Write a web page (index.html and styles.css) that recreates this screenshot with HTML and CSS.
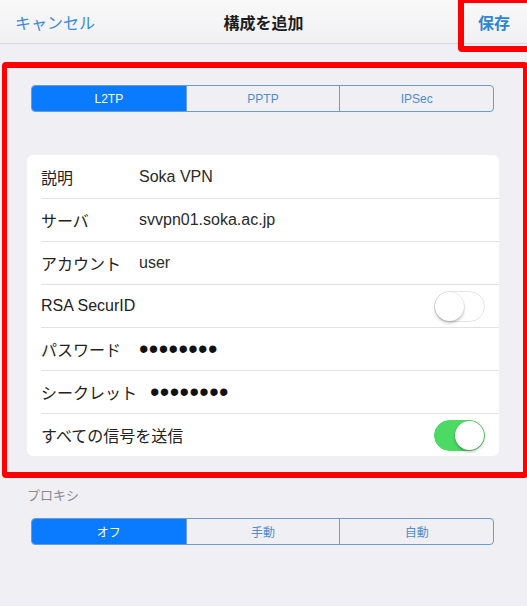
FILE: index.html
```html
<!DOCTYPE html>
<html lang="ja">
<head>
    <meta charset="UTF-8">
    <meta name="viewport" content="width=device-width, initial-scale=1.0">
    <title>構成を追加</title>
    <link rel="stylesheet" href="styles.css">
</head>
<body>
    <div class="screen">
        <header class="navbar">
            <span class="nav-cancel">キャンセル</span>
            <span class="nav-title">構成を追加</span>
            <span class="nav-save">保存</span>
        </header>

        <main class="content">
            <div class="segmented type-seg">
                <div class="segment active">L2TP</div>
                <div class="segment">PPTP</div>
                <div class="segment">IPSec</div>
            </div>

            <div class="card">
                <div class="row">
                    <span class="label">説明</span>
                    <span class="value">Soka VPN</span>
                </div>
                <div class="row">
                    <span class="label">サーバ</span>
                    <span class="value">svvpn01.soka.ac.jp</span>
                </div>
                <div class="row">
                    <span class="label">アカウント</span>
                    <span class="value">user</span>
                </div>
                <div class="row">
                    <span class="label">RSA SecurID</span>
                    <span class="toggle"><span class="knob"></span></span>
                </div>
                <div class="row">
                    <span class="label">パスワード</span>
                    <span class="value dots">••••••••</span>
                </div>
                <div class="row">
                    <span class="label">シークレット</span>
                    <span class="value dots">••••••••</span>
                </div>
                <div class="row">
                    <span class="label">すべての信号を送信</span>
                    <span class="toggle on"><span class="knob"></span></span>
                </div>
            </div>

            <div class="section-label">プロキシ</div>

            <div class="segmented proxy-seg">
                <div class="segment active">オフ</div>
                <div class="segment">手動</div>
                <div class="segment">自動</div>
            </div>
        </main>

        <!-- 注釈の赤枠 -->
        <div class="mark mark-save"></div>
        <div class="mark mark-form"></div>
    </div>
</body>
</html>
```

FILE: styles.css
```css
body {
    margin: 0;
    background: #ffffff;
    font-family: "Liberation Sans", "Noto Sans CJK JP", sans-serif;
    color: #222222;
}

.screen {
    position: relative;
    width: 527px;
}

.navbar {
    display: grid;
    grid-template-columns: 1fr auto 1fr;
    align-items: center;
    height: 43px;
    background: linear-gradient(#f9f9fa, #f1f1f3);
    border-bottom: 1px solid #d8d8dc;
    font-size: 16px;
}

.nav-cancel {
    padding-left: 15px;
    color: #3a89d6;
}

.nav-title {
    font-weight: bold;
    color: #1c1c1c;
}

.nav-save {
    justify-self: end;
    padding-right: 17px;
    font-weight: bold;
    color: #2f84d4;
}

.content {
    height: 562px;
    background: #efeff4;
    overflow: hidden;
}

.segmented {
    display: grid;
    grid-template-columns: repeat(3, 1fr);
    height: 25px;
    margin: 0 33px 0 31px;
    border: 1px solid #6a9ccf;
    border-radius: 4px;
    overflow: hidden;
    font-size: 12px;
}

.type-seg {
    margin-top: 41px;
}

.segment {
    display: flex;
    align-items: center;
    justify-content: center;
    color: #4f8dcc;
    border-left: 1px solid #6a9ccf;
}

.segment:first-child {
    border-left: none;
}

.segment.active {
    background: #0a7bff;
    color: #ffffff;
}

.card {
    margin: 43px 28px 0 27px;
    background: #ffffff;
    border-radius: 6px;
}

.row {
    display: flex;
    align-items: center;
    height: 42px;
    margin-left: 14px;
    padding-right: 14px;
    border-top: 1px solid #e2e2e6;
    font-size: 16px;
}

.row:first-child {
    height: 43px;
    border-top: none;
}

.label {
    min-width: 85px;
    margin-right: 13px;
    color: #222222;
}

.value {
    color: #2a2a2a;
}

.dots {
    font-size: 27px;
    letter-spacing: 0.4px;
    color: #111111;
    line-height: 20px;
}

.toggle {
    position: relative;
    width: 49px;
    height: 29px;
    margin-left: auto;
    border: 1px solid #e4e4e8;
    border-radius: 16px;
    background: #ffffff;
}

.toggle .knob {
    position: absolute;
    top: 0;
    left: 0;
    width: 29px;
    height: 29px;
    border-radius: 50%;
    background: #ffffff;
    box-shadow: 0 2px 3px rgba(0, 0, 0, 0.25), 0 0 0 0.5px rgba(0, 0, 0, 0.08);
}

.toggle.on {
    background: #4cd964;
    border-color: #4cd964;
}

.toggle.on .knob {
    left: 20px;
}

.section-label {
    margin: 32px 0 0 27px;
    font-size: 13px;
    line-height: 16px;
    color: #8a8a8f;
}

.proxy-seg {
    margin-top: 14px;
}

.mark {
    position: absolute;
    border: 6px solid #ff0000;
    border-radius: 4px;
}

.mark-save {
    top: -3px;
    left: 458px;
    width: 70px;
    height: 43px;
}

.mark-form {
    top: 62px;
    left: 2px;
    width: 516px;
    height: 404px;
    border-width: 6px 5px;
}
```
